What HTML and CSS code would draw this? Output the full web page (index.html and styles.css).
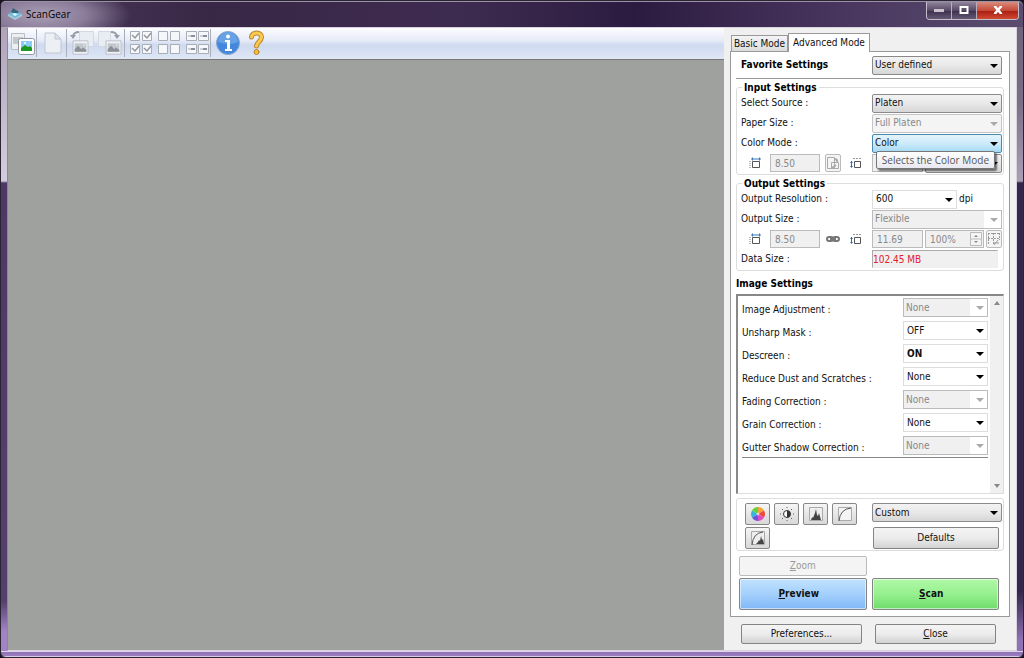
FILE: index.html
```html
<!DOCTYPE html>
<html lang="en">
<head>
<meta charset="utf-8">
<title>ScanGear</title>
<link rel="stylesheet" href="styles.css">
</head>
<body>
<svg class="defs" aria-hidden="true">
  <symbol id="photo" viewBox="0 0 20 18">
    <path d="M1 1h18v16H1z" fill="#f0f2f5" stroke="#b4b9c2"/>
    <path d="M3 4h14v10H3z" fill="#c3c7ce"/>
    <path d="M3 14V11l4-4 4 4 2-2 4 3v2z" fill="#8b9098"/><circle cx="14" cy="6" r="1" fill="#eee"/>
  </symbol>
  <symbol id="page" viewBox="0 0 18 22">
    <path d="M1 1h10l6 6v14H1z" fill="#eceff4" stroke="#c0c6d0"/><path d="M11 1v6h6z" fill="#dde1e8" stroke="#c0c6d0"/>
  </symbol>
  <symbol id="width" viewBox="0 0 12 12">
    <path d="M3 2h8" stroke="#3a78b8"/><path d="M2 2l2-2v4zM12 2l-2-2v4z" fill="#3a78b8"/>
    <path d="M3.500 4.500h7v6h-7z" fill="none" stroke="#555"/><path d="M1 4v7" stroke="#777" stroke-dasharray="1 1"/>
  </symbol>
  <symbol id="height" viewBox="0 0 12 12">
    <path d="M3 1.500h9" stroke="#999" stroke-dasharray="2 1"/>
    <path d="M4.500 4.500h6v6h-6z" fill="none" stroke="#555"/>
    <path d="M1.500 4v6" stroke="#2a6cc0"/><path d="M0 6l1.500-2L3 6zM0 9l1.500 2L3 9z" fill="#2a6cc0"/>
  </symbol>
</svg>
<div class="window">
  <header class="titlebar">
    <svg class="app-icon" viewBox="0 0 14 12"><path d="M0 6l7-3 7 3-7 4z" fill="#69bfdc"/><path d="M0 6v2l7 4 7-4V6l-7 4z" fill="#a9cbd4"/><path d="M3 4l2-4 6 4-3 2z" fill="#33677f"/><path d="M4 6l3-1 3 1-3 2z" fill="#dff8ff"/></svg>
    <h1 class="title">ScanGear</h1>
    <div class="caption-buttons">
      <button class="cap cap-min" aria-label="Minimize"><svg viewBox="0 0 12 8"><path d="M1 3h10v3H1z" fill="#c9c4d0"/></svg></button>
      <button class="cap cap-max" aria-label="Maximize"><svg viewBox="0 0 12 8"><path d="M2.500 1h7v6h-7z" fill="none" stroke="#fff" stroke-width="2"/></svg></button>
      <button class="cap cap-close" aria-label="Close window"><svg viewBox="0 0 12 8"><path d="M2.500 0l7 8M9.500 0l-7 8" stroke="#fff" stroke-width="2.500"/></svg></button>
    </div>
  </header>
  <div class="client">
    <main class="workspace">
      <div class="toolbar">
        <button class="tool" aria-label="Thumbnail"><svg viewBox="0 0 28 28" width="28" height="28">
          <path d="M3.500 4.500h13v16h-13z" fill="#eceff2" stroke="#b9bec6"/><path d="M5 8h10v7H5z" fill="#c4c8cd"/>
          <rect x="10.500" y="9.500" width="16" height="16" rx="2" fill="#fff" stroke="#8f979f"/>
          <path d="M13 12h11v10H13z" fill="#8ccdf5"/><path d="M13 22v-3l4-3 3 2 2-1 2 2v3z" fill="#1c9822"/><circle cx="17" cy="14" r="1" fill="#fff"/></svg></button>
        <span class="sep"></span>
        <button class="tool" aria-label="Clear" disabled><svg viewBox="0 0 28 28" width="28" height="28"><use href="#page" x="6" y="3" width="18" height="22"/></svg></button>
        <span class="sep"></span>
        <button class="tool" aria-label="Rotate left" disabled><svg viewBox="0 0 28 28" width="28" height="28"><path d="M11.500 2.500h14v15h-14z" fill="#e8ecf3" stroke="#d3d8e1"/><use href="#photo" x="3" y="11" width="19" height="15"/><path d="M11 3Q6 3 5 7" fill="none" stroke="#979da8" stroke-width="2"/><path d="M2 6h6l-3 4z" fill="#979da8"/></svg></button>
        <button class="tool" aria-label="Rotate right" disabled><svg viewBox="0 0 28 28" width="28" height="28"><path d="M2.500 2.500h12v15h-12z" fill="#e8ecf3" stroke="#d3d8e1"/><use href="#photo" x="8" y="11" width="19" height="15"/><path d="M15 3q5 0 6 4" fill="none" stroke="#979da8" stroke-width="2"/><path d="M18 6h6l-3 4z" fill="#979da8"/></svg></button>
        <span class="sep"></span>
        <button class="tool" aria-label="Check all" disabled><svg viewBox="0 0 28 28" width="28" height="28" fill="#f5f7fa" stroke="#a9adb6"><path d="M4.500 2.500h9v9h-9zM16.500 2.500h9v9h-9zM4.500 15.500h9v9h-9zM16.500 15.500h9v9h-9z"/><path d="M6 6l3 3 4-5M18 6l3 3 4-5M6 19l3 3 4-5M18 19l3 3 4-5" fill="none" stroke="#92979f" stroke-width="1.500"/></svg></button>
        <button class="tool" aria-label="Uncheck all" disabled><svg viewBox="0 0 28 28" width="28" height="28" fill="#f5f7fa" stroke="#a9adb6"><path d="M4.500 2.500h9v9h-9zM16.500 2.500h9v9h-9zM4.500 15.500h9v9h-9zM16.500 15.500h9v9h-9z"/></svg></button>
        <button class="tool" aria-label="Select all frames" disabled><svg viewBox="0 0 28 28" width="28" height="28" fill="#f5f7fa" stroke="#a9adb6"><path d="M4.500 2.500h10v9h-10zM16.500 2.500h10v9h-10zM4.500 15.500h10v9h-10zM16.500 15.500h10v9h-10z"/><path d="M6 7h3M18 7h3M6 20h3M18 20h3" stroke="#a4a9b2"/><path d="M9 7h4M21 7h4M9 20h4M21 20h4" stroke="#888e98" stroke-width="2"/></svg></button>
        <span class="sep"></span>
        <button class="tool" aria-label="Information"><svg viewBox="0 0 28 28" width="28" height="28"><circle cx="16" cy="14" r="11.500" fill="#4388dc" stroke="#8da9cd"/><path d="M6 13a10 10 0 0 1 20 0q-9 4-20 0z" fill="#78aeea" opacity=".7"/><circle cx="16" cy="7.500" r="2" fill="#fff"/><path d="M13 11h5v9h2v2h-7v-2h2v-7h-2z" fill="#fff"/></svg></button>
        <button class="tool" aria-label="Help"><svg viewBox="0 0 28 28" width="28" height="28" fill="none" stroke-linecap="round"><path d="M11.500 8C12 2.500 22 2.500 21.500 8.500 21 12.500 17 13 16.500 17" stroke="#b8862e" stroke-width="5"/><path d="M11.500 8C12 2.500 22 2.500 21.500 8.500 21 12.500 17 13 16.500 17" stroke="#fbc94c" stroke-width="3"/><circle cx="16.500" cy="23" r="2.500" fill="#f7bd35" stroke="#b8862e"/></svg></button>
      </div>
      <div class="canvas"></div>
    </main>
    <aside class="side">
      <div class="tabs" role="tablist">
        <button class="tab" role="tab">Basic Mode</button>
        <button class="tab tab-active" role="tab" aria-selected="true">Advanced Mode</button>
      </div>
      <div class="panel">
        <div class="row favorite">
          <label class="heading" for="fav">Favorite Settings</label>
          <span class="pick"><select id="fav"><option>User defined</option></select></span>
        </div>
        <fieldset class="group">
          <legend>Input Settings</legend>
          <div class="rows">
            <div class="row"><label for="src">Select Source :</label><span class="pick"><select id="src"><option>Platen</option></select></span></div>
            <div class="row"><label for="paper">Paper Size :</label><span class="pick"><select id="paper" disabled><option>Full Platen</option></select></span></div>
            <div class="row"><label for="mode">Color Mode :</label><span class="pick"><select id="mode" class="hot"><option>Color</option></select></span></div>
            <div class="row">
              <span class="dims"><svg class="dim"><use href="#width"/></svg><input class="num" aria-label="Input width" value="8.50" disabled>
                <button class="mini" aria-label="Switch aspect ratio" disabled><svg viewBox="0 0 14 14" fill="none" stroke="#aaa"><path d="M1.500 1.500h7v11h-7zM5.500 6.500h7v6h-7z"/><path d="M8 3q4 0 3 3M10 9l-4 3" stroke-width="2"/></svg></button>
                <svg class="dim dim-last"><use href="#height"/></svg></span>
              <span class="fields"><input class="num" aria-label="Input height" value="" disabled><span class="pick"><select aria-label="Units"><option></option></select></span></span>
            </div>
          </div>
          <div class="tooltip" role="tooltip">Selects the Color Mode</div>
        </fieldset>
        <fieldset class="group">
          <legend>Output Settings</legend>
          <div class="rows">
            <div class="row"><label for="res">Output Resolution :</label><span class="fields"><span class="pick res"><select id="res" class="flat"><option>600</option></select></span><span>dpi</span></span></div>
            <div class="row"><label for="osize">Output Size :</label><span class="pick"><select id="osize" class="inset" disabled><option>Flexible</option></select></span></div>
            <div class="row">
              <span class="dims"><svg class="dim"><use href="#width"/></svg><input class="num" aria-label="Output width" value="8.50" disabled>
                <svg class="chain" viewBox="0 0 14 8" fill="none" stroke="#777" stroke-width="2"><rect x="1" y="2" width="6" height="4" rx="2"/><rect x="7" y="2" width="6" height="4" rx="2"/><path d="M4 4h6"/></svg>
                <svg class="dim dim-last"><use href="#height"/></svg></span>
              <span class="fields"><input class="num" aria-label="Output height" value="11.69" disabled>
                <span class="spin"><input class="num" aria-label="Scale" value="100%" disabled><svg viewBox="0 0 12 14"><path d="M.5.500h11v13H.5zM0 7h12" fill="#f4f4f4" stroke="#bbb"/><path d="M4 5l2-2 2 2zM4 9l2 2 2-2z" fill="#888"/></svg></span>
                <button class="mini" aria-label="Crop frame" disabled><svg viewBox="0 0 14 14" fill="none" stroke="#999"><path d="M1 1.500h12M1.500 1v12M1 6.500h12M6.500 1v12M12.500 1v7" stroke-dasharray="2 1"/><path d="M6 11h6M11 8l-4 5"/></svg></button></span>
            </div>
            <div class="row"><span>Data Size :</span><output class="data">102.45 MB</output></div>
          </div>
        </fieldset>
        <h2 class="heading section">Image Settings</h2>
        <div class="list">
          <div class="list-body">
            <div class="item"><label for="i1">Image Adjustment :</label><span class="pick"><select id="i1" class="inset" disabled><option>None</option></select></span></div>
            <div class="item"><label for="i2">Unsharp Mask :</label><span class="pick"><select id="i2" class="flat"><option>OFF</option></select></span></div>
            <div class="item"><label for="i3">Descreen :</label><span class="pick"><select id="i3" class="flat strong"><option>ON</option></select></span></div>
            <div class="item"><label for="i4">Reduce Dust and Scratches :</label><span class="pick"><select id="i4" class="flat"><option>None</option></select></span></div>
            <div class="item"><label for="i5">Fading Correction :</label><span class="pick"><select id="i5" class="inset" disabled><option>None</option></select></span></div>
            <div class="item"><label for="i6">Grain Correction :</label><span class="pick"><select id="i6" class="flat"><option>None</option></select></span></div>
            <div class="item"><label for="i7">Gutter Shadow Correction :</label><span class="pick"><select id="i7" class="inset" disabled><option>None</option></select></span></div>
          </div>
          <div class="scroll"><span class="up"></span><span class="down"></span></div>
        </div>
        <div class="adjust">
          <div class="icons">
            <button class="ibtn" aria-label="Saturation"><svg viewBox="0 0 16 16"><path d="M8 8V1a7 7 0 0 1 6 3.500z" fill="#f7a13a"/><path d="M8 8l6-3.500a7 7 0 0 1 0 7z" fill="#ee4a3c"/><path d="M8 8l6 3.500A7 7 0 0 1 8 15z" fill="#e04cc0"/><path d="M8 8v7a7 7 0 0 1-6-3.500z" fill="#6c55dd"/><path d="M8 8l-6 3.500a7 7 0 0 1 0-7z" fill="#36b4dc"/><path d="M8 8L2 4.500A7 7 0 0 1 8 1z" fill="#68cf3a"/><circle cx="8" cy="8" r="1.500" fill="#fff" opacity=".6"/></svg></button>
            <button class="ibtn" aria-label="Brightness and contrast"><svg viewBox="0 0 16 16"><circle cx="8" cy="8" r="3.500" fill="#fff" stroke="#333"/><path d="M8 4.500a3.500 3.500 0 0 1 0 7z" fill="#333"/><path d="M8 1v1M8 14v1M1 8h1M14 8h1M3 3l1 1M12 12l1 1M3 13l1-1M12 4l1-1" stroke="#666"/></svg></button>
            <button class="ibtn" aria-label="Histogram"><svg viewBox="0 0 16 16"><path d="M1.500 1.500h13v13h-13z" fill="#eee" stroke="#aaa"/><path d="M3 14l1-3 1 1 2-5 1-4 1 6 1 1 1-3 2 7z" fill="#444"/></svg></button>
            <button class="ibtn" aria-label="Tone curve"><svg viewBox="0 0 16 16"><path d="M1.500 1.500h13v13h-13z" fill="#f4f4f4" stroke="#aaa"/><path d="M2 15Q3 3 14 2" fill="none" stroke="#555"/></svg></button>
            <button class="ibtn" aria-label="Final review"><svg viewBox="0 0 16 16"><path d="M1.500 1.500h13v13h-13z" fill="#eee" stroke="#aaa"/><path d="M6 14l2-2 1-2 1 1 1-5 1 4 1-1 1 5z" fill="#444"/><path d="M2 15Q3 3 13 2" fill="none" stroke="#555"/></svg></button>
          </div>
          <div class="presets">
            <span class="pick"><select aria-label="Preset"><option>Custom</option></select></span>
            <button class="btn defaults">Defaults</button>
          </div>
        </div>
        <div class="actions">
          <button class="btn zoom" disabled><u>Z</u>oom</button>
          <button class="btn preview"><u>P</u>review</button>
          <button class="btn scan"><u>S</u>can</button>
        </div>
      </div>
      <div class="bottom">
        <button class="btn">Preferences...</button>
        <button class="btn"><u>C</u>lose</button>
      </div>
    </aside>
  </div>
</div>
</body>
</html>
```
FILE: styles.css
```css
* { box-sizing: border-box; }
body {
  margin: 0;
  background: #17121f;
  color: #111;
  font: 10px/12px "DejaVu Sans Condensed", "DejaVu Sans", sans-serif;
}
button, select, input { font: inherit; color: inherit; margin: 0; }
button { padding: 0; }
.defs { position: absolute; width: 0; height: 0; }

.window {
  display: flex;
  flex-direction: column;
  min-height: 100vh;
  padding: 0 6px 6px;
  border: 1px solid #2a2433;
  border-radius: 6px;
  background:
    linear-gradient(#e0d6ea 1px, #8f72b4 1px, #9a7ec0 5px, #d9cbe8 5px) bottom / 100% 6px no-repeat,
    linear-gradient(#a99db3 0, #d5cddd 180px, #4e3768 182px, #54406e 600px, #a184c4 630px) left / 6px 100% no-repeat,
    linear-gradient(#6d6078 0, #7a6d88 100px, #a99fb5 180px, #33264a 182px, #33264a 590px, #8f72b4 640px) right / 6px 100% no-repeat,
    #3a2850;
}
.titlebar {
  display: flex;
  align-items: center;
  gap: 4px;
  height: 26px;
  margin: 0 -6px;
  padding: 0 0 2px 7px;
  border-top: 1px solid #9b91a6;
  border-radius: 5px 5px 0 0;
  background:
    radial-gradient(ellipse 90px 30px at 40px 13px, #aa9eb6 0, #8b7d9a 50%, transparent 100%),
    linear-gradient(90deg, #4c3b5e 0, #392746 20%, #3e2b50 45%, #2c1b40 62%, #46335c 80%, #5c4d70 100%);
}
.app-icon { width: 14px; height: 12px; }
.title { flex: 1; margin: 0; font: 10px/14px "Open Sans", sans-serif; color: #000; }
.caption-buttons { display: flex; align-self: flex-start; margin-right: 4px; border: 1px solid #c4bccd; border-top: 0; border-radius: 0 0 4px 4px; overflow: hidden; }
.cap { width: 25px; height: 17px; border: 0; border-right: 1px solid #b6aebf; background: linear-gradient(#8f849b, #564966 50%, #3c2f4e 51%, #655873); }
.cap svg { width: 12px; height: 8px; }
.cap-close { width: 41px; border: 0; background: linear-gradient(#d98b7c, #c64a38 50%, #a81d10 51%, #cf4a32); }

.client { flex: 1; display: flex; background: #f0f0f0; border: 1px solid #d9d3df; border-left-color: #8d8498; }
.workspace { flex: 1; display: flex; flex-direction: column; }
.toolbar { display: flex; align-items: center; height: 31px; padding-bottom: 2px; background: linear-gradient(#fdfdff, #e6ebf7 40%, #cfdaf0 55%, #dfe7f6); }
.tool { width: 28px; height: 28px; border: 0; background: none; }
.tool svg { display: block; }
.sep { width: 1px; height: 28px; margin-right: 1px; background: #a9afba; }
.canvas { flex: 1; background: #9fa19f; border-top: 1px solid #777; }

.side { flex: 0 0 292px; display: flex; flex-direction: column; padding: 5px 6px 4px 6px; }
.tabs { display: flex; align-items: flex-end; padding-left: 1px; }
.tab { height: 16px; width: 57px; border: 1px solid #999; border-bottom: 0; background: linear-gradient(#f4f4f4, #dcdcdc); }
.tab-active { height: 19px; width: 82px; margin-bottom: -1px; background: #fff; position: relative; }
.panel { padding: 3px 5px 6px; border: 1px solid #999; background: #fff; }
.heading { font-size: 10px; font-weight: bold; margin: 0; color: #000; }
.row { display: grid; grid-template-columns: 131px 1fr; align-items: center; height: 20px; }
.favorite { height: 24px; margin: 0 2px 0 0; padding: 0 0 3px 5px; border-bottom: 1px solid #999; }

.pick { position: relative; display: block; }
.pick::after {
  content: ""; position: absolute; right: 4px; top: 8px;
  border: 4px solid transparent; border-top-color: #000; border-bottom: 0; pointer-events: none;
}
.pick:has(:disabled)::after { border-top-color: #aaa; }
select {
  display: block; width: 100%; height: 19px; padding: 0 2px; appearance: none; color: #111;
  border: 1px solid #8a8a8a; border-radius: 2px; background: linear-gradient(#f3f3f3, #e8e8e8 50%, #d6d6d6);
}
select:disabled { color: #888; border-color: #c5c5c5; background: #f4f4f4; opacity: 1; }
select.hot { border-color: #4a89ad; background: linear-gradient(#e4f4fc, #cdeafa 50%, #a4d9f4); }
select.flat { padding-left: 3px; border-color: #ddd; border-radius: 0; background: #fff; }
select.inset { border-color: #bbb; border-radius: 0; background: #f0f0f0; box-shadow: inset -17px 0 #fff; }
select.strong { font-weight: bold; }

.group { position: relative; min-width: 0; margin: 3px 0 0; padding: 0 1px 1px 4px; border: 1px solid #ddd; border-radius: 3px; }
.group legend { height: 11px; margin-left: 1px; padding: 0 2px; font-weight: bold; line-height: 11px; color: #000; }
.dims { display: flex; align-items: center; padding-left: 8px; gap: 5px; }
.dim { width: 12px; height: 12px; flex: none; }
.dims .num { width: 50px; margin-left: 4px; }
.dim-last { margin-left: 4px; }
.num { height: 18px; width: 51px; min-width: 0; padding: 0 4px; border: 1px solid #bbb; background: #f0f0f0; color: #888; }
.mini { width: 16px; height: 18px; flex: none; border: 1px solid #bbb; border-radius: 2px; background: #f4f4f4; }
.mini svg { display: block; width: 14px; height: 14px; }
.chain { width: 16px; height: 8px; flex: none; }
.fields { display: flex; align-items: center; gap: 2px; }
.fields .pick { flex: 1; }
.fields .res { flex: 0 0 85px; }
.spin { position: relative; flex: 1; display: flex; }
.spin .num { width: 100%; }
.spin svg { position: absolute; right: 2px; top: 2px; width: 12px; height: 14px; }
.data { height: 18px; margin-right: 4px; line-height: 18px; color: #e0202a; background: #f0f0f0; border: 1px solid #aaa; border-right-color: #eee; border-bottom-color: #eee; }
.tooltip {
  position: absolute; right: 8px; bottom: 5px; height: 18px; padding: 0 5px; white-space: nowrap;
  font: 10px/16px "Open Sans", sans-serif; color: #555;
  border: 1px solid #777; border-radius: 2px; background: linear-gradient(#fff, #e8e9f1); box-shadow: 2px 2px 2px #0008;
}

.section { margin: 7px 0 4px; line-height: 12px; }
.list { display: flex; height: 200px; border: 2px solid #888; border-width: 2px 1px 1px 2px; border-right-color: #ddd; border-bottom-color: #ddd; }
.list-body { flex: 1; padding: 0 2px 0 4px; }
.item { display: grid; grid-template-columns: 1fr 85px; align-items: center; height: 23px; }
.item label { padding-top: 5px; white-space: nowrap; }
.item:last-child { border-bottom: 1px solid #888; height: 24px; }
.scroll { width: 13px; display: flex; flex-direction: column; justify-content: space-between; align-items: center; padding: 5px 0; background: #f0f0f0; }
.up, .down { border: 3px solid transparent; }
.up { border-top: 0; border-bottom: 4px solid #888; }
.down { border-bottom: 0; border-top: 4px solid #888; }

.adjust { display: grid; grid-template-columns: 127px 1fr; margin-top: 4px; padding: 4px 1px 1px 8px; border: 1px solid #ddd; border-radius: 3px; }
.icons { display: flex; flex-wrap: wrap; gap: 2px 4px; align-content: flex-start; margin-right: 9px; }
.ibtn { width: 25px; height: 22px; border: 1px solid #888; border-radius: 2px; background: linear-gradient(#f5f5f5, #d8d8d8); }
.ibtn svg { width: 16px; height: 16px; display: block; margin: auto; }
.btn { height: 20px; border: 1px solid #848484; border-radius: 2px; background: linear-gradient(#f4f4f4, #ececec 50%, #d2d2d2); }
.defaults { display: block; width: 126px; height: 22px; margin: 5px 0 0 1px; }
.actions { display: grid; grid-template-columns: 1fr 1fr; gap: 2px 5px; padding: 5px 5px 0 3px; }
.zoom { grid-column: 1; color: #999; border-color: #bbb; background: #f4f4f4; }
.preview, .scan { height: 32px; padding-right: 8px; font-weight: bold; grid-row: 2; box-shadow: inset 0 0 0 1px #fff8; }
.preview { background: linear-gradient(#c0e2ff, #a4d0fc 50%, #80b8f8); }
.scan { background: linear-gradient(#b0f8a8, #96f08e 50%, #70dc6c); }
.bottom { display: grid; grid-template-columns: 1fr 1fr; gap: 13px; padding: 7px 14px 0 11px; }
```
